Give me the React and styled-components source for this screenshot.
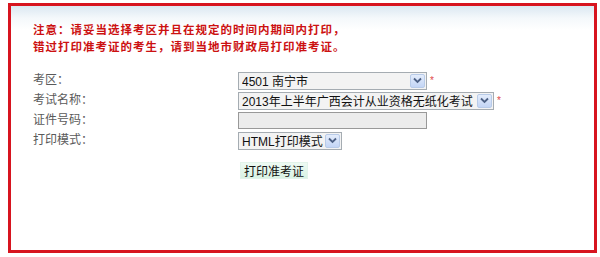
import React from 'react';
import styled, { createGlobalStyle } from 'styled-components';

const GlobalStyle = createGlobalStyle`
  html, body {
    margin: 0;
    padding: 0;
    background: #ffffff;
  }
  body {
    font-family: "Liberation Sans", "Noto Sans CJK SC", sans-serif;
    font-size: 12px;
  }
`;

const Page = styled.div`
  padding: 3px 3px 4px 8px;
`;

const Frame = styled.div`
  box-sizing: border-box;
  width: 589px;
  height: 250px;
  border: 3px solid #d7141f;
  background: linear-gradient(to bottom, #dbe8f2 0px, #f4f8fb 12px, #ffffff 24px);
  padding: 15px 0 0 22px;
`;

const NoticeLine = styled.div`
  color: #cc1111;
  font-weight: bold;
  font-size: 11.5px;
  letter-spacing: 1px;
  line-height: 17px;
  height: 17px;
  white-space: nowrap;
  font-family: "Noto Sans CJK SC", sans-serif;
`;

const Form = styled.div`
  margin-top: 16px;
  display: grid;
  grid-template-columns: 205px 1fr;
  grid-auto-rows: 19px;
  row-gap: 1px;
`;

const Label = styled.div`
  color: #5a5a5a;
  font-size: 12px;
  line-height: 14px;
  padding-top: 1px;
  font-family: "Noto Sans CJK SC", sans-serif;
`;

const Cell = styled.div`
  display: flex;
  align-items: center;
`;

const Select = styled.div`
  width: ${p => p.$w}px;
  height: 18px;
  box-sizing: border-box;
  border: 1px solid #a5acb2;
  background: #f3f3f3;
  display: flex;
  align-items: center;
  padding: 0 1px 0 3px;
  color: #111111;
  font-size: 12px;
  font-family: "Liberation Sans", "Noto Sans CJK SC", sans-serif;
`;

const SelectText = styled.span`
  flex: 1;
  white-space: nowrap;
  overflow: hidden;
`;

const Arrow = styled.div`
  width: 15px;
  height: 14px;
  box-sizing: border-box;
  border: 1px solid #b8cbe8;
  border-radius: 2px;
  background: linear-gradient(to bottom, #e3ecfb, #c3d5f5);
  display: flex;
  align-items: center;
  justify-content: center;
`;

const Star = styled.span`
  color: #e04848;
  font-size: 10px;
  margin-left: 3px;
  line-height: 10px;
  align-self: flex-start;
  margin-top: 5px;
`;

const Input = styled.div`
  width: 189px;
  height: 17px;
  box-sizing: border-box;
  border: 1px solid #999999;
  background: #ececec;
`;

const ButtonRow = styled.div`
  margin: 12px 0 0 207px;
`;

const Button = styled.button`
  height: 17px;
  padding: 0 3px;
  border: 1px solid #e2f3ea;
  background: linear-gradient(to bottom, #eefaf3, #d9f2e4);
  color: #111111;
  font-size: 12px;
  line-height: 14px;
  font-family: "Noto Sans CJK SC", sans-serif;
`;

function Chevron() {
  return (
    <svg width="9" height="7" viewBox="0 0 9 7">
      <path d="M1 1.5 L4.5 5 L8 1.5" fill="none" stroke="#4d6185" strokeWidth="1.8" />
    </svg>
  );
}

function Dropdown({ width, children }) {
  return (
    <Select $w={width}>
      <SelectText>{children}</SelectText>
      <Arrow><Chevron /></Arrow>
    </Select>
  );
}

export default function App() {
  return (
    <Page>
      <GlobalStyle />
      <Frame>
        <NoticeLine>注意：请妥当选择考区并且在规定的时间内期间内打印，</NoticeLine>
        <NoticeLine>错过打印准考证的考生，请到当地市财政局打印准考证。</NoticeLine>
        <Form>
          <Label>考区：</Label>
          <Cell>
            <Dropdown width={189}>4501 南宁市</Dropdown>
            <Star>*</Star>
          </Cell>
          <Label>考试名称：</Label>
          <Cell>
            <Dropdown width={256}>2013年上半年广西会计从业资格无纸化考试</Dropdown>
            <Star>*</Star>
          </Cell>
          <Label>证件号码：</Label>
          <Cell>
            <Input />
          </Cell>
          <Label>打印模式：</Label>
          <Cell>
            <Dropdown width={104}>HTML打印模式</Dropdown>
          </Cell>
        </Form>
        <ButtonRow>
          <Button>打印准考证</Button>
        </ButtonRow>
      </Frame>
    </Page>
  );
}
